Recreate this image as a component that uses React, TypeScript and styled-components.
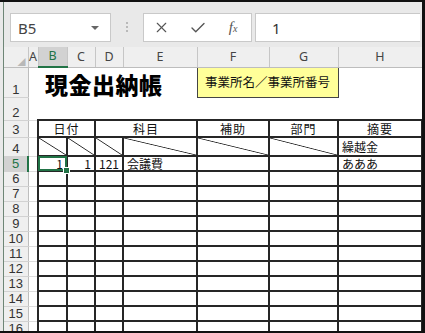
import React from "react";
import styled, { createGlobalStyle, css } from "styled-components";
import { X, Check } from "lucide-react";

const GlobalStyle = createGlobalStyle`
  html, body {
    margin: 0;
    padding: 0;
    background: #fff;
  }
  body {
    font-family: "Noto Sans CJK JP", "Noto Sans", sans-serif;
  }
`;

const GREEN = "#217346";
const LINE = "2px solid #262626";

const Frame = styled.div`
  width: 425px;
  height: 333px;
  box-sizing: border-box;
  border-top: 2px solid #111;
  border-right: 3px solid #111;
  border-bottom: 2px solid #111;
  padding-left: 3px;
  background: #e9e9e9;
  overflow: hidden;
  display: flex;
  flex-direction: column;
`;

const Inner = styled.div`
  flex: 1;
  min-height: 0;
  border-left: 1px solid #6e8676;
  background: #fff;
  display: flex;
  flex-direction: column;
  overflow: hidden;
`;

const Toolbar = styled.div`
  height: 45px;
  flex: none;
  box-sizing: border-box;
  background: #e9e9e9;
  display: flex;
  align-items: flex-start;
  padding: 11px 2px 0 6px;
`;

const NameBox = styled.div`
  width: 101px;
  height: 29px;
  box-sizing: border-box;
  border: 1px solid #c9c9c9;
  background: #fff;
  display: flex;
  align-items: center;
  justify-content: space-between;
  padding: 0 11px 0 7px;
  font-family: "Noto Sans", sans-serif;
  font-size: 15px;
  color: #444;
`;

const Caret = styled.span`
  width: 0;
  height: 0;
  border-left: 4px solid transparent;
  border-right: 4px solid transparent;
  border-top: 4px solid #666;
`;

const Dots = styled.div`
  width: 3px;
  margin: 9px 14px 0 15px;
  display: flex;
  flex-direction: column;
  gap: 2px;

  & span {
    width: 2px;
    height: 2px;
    background: #b9b9b9;
  }
`;

const ActionBox = styled.div`
  width: 109px;
  height: 29px;
  box-sizing: border-box;
  border: 1px solid #c9c9c9;
  background: #fff;
  display: flex;
`;

const Action = styled.span`
  width: 36px;
  display: flex;
  align-items: center;
  justify-content: center;
  color: #555;
`;

const Fx = styled.span`
  font-family: "Liberation Serif", serif;
  font-style: italic;
  font-size: 15px;
  color: #555;

  & sub {
    font-size: 10px;
    vertical-align: 0;
  }
`;

const Formula = styled.div`
  flex: 1;
  height: 29px;
  margin-left: 3px;
  box-sizing: border-box;
  border: 1px solid #c9c9c9;
  border-right: none;
  background: #fff;
  display: flex;
  align-items: center;
  padding-left: 16px;
  font-family: "Noto Sans", sans-serif;
  font-size: 15px;
  color: #333;
`;

const Sheet = styled.table`
  border-collapse: collapse;
  table-layout: fixed;
  width: 418px;
  flex: none;
  font-size: 12px;
  color: #111;
`;

const ColHead = styled.th<{ $active?: boolean }>`
  height: 19px;
  padding: 0;
  font-weight: normal;
  font-family: "Noto Sans", sans-serif;
  font-size: 12.5px;
  line-height: 1;
  color: ${({ $active }) => ($active ? GREEN : "#444")};
  background: ${({ $active }) => ($active ? "#d2d2d2" : "#efefef")};
  border-right: 1px solid #c6c6c6;
  border-bottom: ${({ $active }) => ($active ? `2px solid ${GREEN}` : "1px solid #bdbdbd")};
  text-align: center;
  vertical-align: middle;
`;

const Corner = styled.th`
  padding: 0 2px 1px 0;
  background: #efefef;
  border-right: 1px solid #c6c6c6;
  border-bottom: 1px solid #bdbdbd;
  text-align: right;
  vertical-align: bottom;
  font-size: 8px;
  line-height: 1;
  color: #b8b8b8;
`;

const RowHead = styled.th<{ $active?: boolean }>`
  padding: 0 0 1px;
  font-weight: normal;
  font-family: "Liberation Sans", sans-serif;
  font-size: 13px;
  line-height: 1;
  color: ${({ $active }) => ($active ? GREEN : "#333")};
  background: ${({ $active }) => ($active ? "#d2d2d2" : "#efefef")};
  border-right: ${({ $active }) => ($active ? `2px solid ${GREEN}` : "1px solid #bdbdbd")};
  border-bottom: 1px solid #d2d2d2;
  text-align: center;
  vertical-align: bottom;
`;

const Row = styled.tr<{ $h: number }>`
  height: ${({ $h }) => $h}px;
`;

const Plain = styled.td<{ $grid?: boolean }>`
  padding: 0;
  ${({ $grid }) =>
    $grid &&
    css`
      border-bottom: 1px solid #dcdcdc;
    `}
`;

const Title = styled.td`
  padding: 3px 0 0 7px;
  font-size: 23px;
  font-weight: 900;
  letter-spacing: 0.5px;
  line-height: 1;
  white-space: nowrap;
  vertical-align: middle;
  color: #000;
`;

const Office = styled.td`
  padding: 0;
  background: #ffff99;
  border: 1px solid #444;
  text-align: center;
  vertical-align: middle;
  font-size: 12.5px;
  line-height: 1;
  white-space: nowrap;
`;

const Cell = styled.td<{
  $align?: "left" | "right" | "center";
  $diag?: boolean;
  $selected?: boolean;
}>`
  padding: 0 3px;
  border: ${LINE};
  text-align: ${({ $align }) => $align || "left"};
  vertical-align: middle;
  line-height: 1;
  white-space: nowrap;
  overflow: hidden;
  ${({ $diag }) =>
    $diag &&
    css`
      background: linear-gradient(
        to top right,
        transparent calc(50% - 0.8px),
        #2a2a2a 50%,
        transparent calc(50% + 0.8px)
      );
    `}
  ${({ $selected }) =>
    $selected &&
    css`
      position: relative;
      overflow: visible;

      &::before {
        content: "";
        position: absolute;
        inset: -1px;
        border: 2px solid ${GREEN};
        pointer-events: none;
      }

      &::after {
        content: "";
        position: absolute;
        right: -4px;
        bottom: -4px;
        width: 5px;
        height: 5px;
        background: ${GREEN};
        border: 1px solid #fff;
      }
    `}
`;

const HeadCell = styled(Cell)`
  padding: 0;
  overflow: visible;
  text-align: center;
  font-size: 12px;
  letter-spacing: 1px;
`;

const columns = ["A", "B", "C", "D", "E", "F", "G", "H"];
const widths = [24, 10, 29, 28, 28, 74, 72, 69, 84];
const emptyRows = [6, 7, 8, 9, 10, 11, 12, 13, 14, 15, 16, 17];

function App() {
  return (
    <>
      <GlobalStyle />
      <Frame>
        <Inner>
          <Toolbar>
            <NameBox>
              B5
              <Caret />
            </NameBox>
            <Dots>
              <span />
              <span />
              <span />
            </Dots>
            <ActionBox>
              <Action>
                <X size={17} strokeWidth={1.6} />
              </Action>
              <Action>
                <Check size={18} strokeWidth={1.8} />
              </Action>
              <Action>
                <Fx>
                  f<sub>x</sub>
                </Fx>
              </Action>
            </ActionBox>
            <Formula>1</Formula>
          </Toolbar>

          <Sheet>
            <colgroup>
              {widths.map((w, i) => (
                <col key={i} style={{ width: w }} />
              ))}
            </colgroup>
            <thead>
              <Row $h={20}>
                <Corner>◢</Corner>
                {columns.map((c) => (
                  <ColHead key={c} $active={c === "B"}>
                    {c}
                  </ColHead>
                ))}
              </Row>
            </thead>
            <tbody>
              <Row $h={30}>
                <RowHead>1</RowHead>
                <Plain />
                <Title colSpan={4}>現金出納帳</Title>
                <Office colSpan={2}>事業所名／事業所番号</Office>
                <Plain />
              </Row>
              <Row $h={23}>
                <RowHead>2</RowHead>
                <Plain $grid />
                <Plain colSpan={7} />
              </Row>
              <Row $h={17}>
                <RowHead>3</RowHead>
                <Plain $grid />
                <HeadCell colSpan={2}>日付</HeadCell>
                <HeadCell colSpan={2}>科目</HeadCell>
                <HeadCell>補助</HeadCell>
                <HeadCell>部門</HeadCell>
                <HeadCell>摘要</HeadCell>
              </Row>
              <Row $h={19}>
                <RowHead>4</RowHead>
                <Plain $grid />
                <Cell $diag />
                <Cell $diag />
                <Cell $diag />
                <Cell $diag />
                <Cell $diag />
                <Cell $diag />
                <Cell>繰越金</Cell>
              </Row>
              <Row $h={14}>
                <RowHead $active>5</RowHead>
                <Plain $grid />
                <Cell $align="right" $selected>
                  1
                </Cell>
                <Cell $align="right">1</Cell>
                <Cell $align="right">121</Cell>
                <Cell>会議費</Cell>
                <Cell />
                <Cell />
                <Cell>あああ</Cell>
              </Row>
              {emptyRows.map((n) => (
                <Row key={n} $h={14}>
                  <RowHead>{n}</RowHead>
                  <Plain $grid />
                  <Cell />
                  <Cell />
                  <Cell />
                  <Cell />
                  <Cell />
                  <Cell />
                  <Cell />
                </Row>
              ))}
            </tbody>
          </Sheet>
        </Inner>
      </Frame>
    </>
  );
}

export default App;
